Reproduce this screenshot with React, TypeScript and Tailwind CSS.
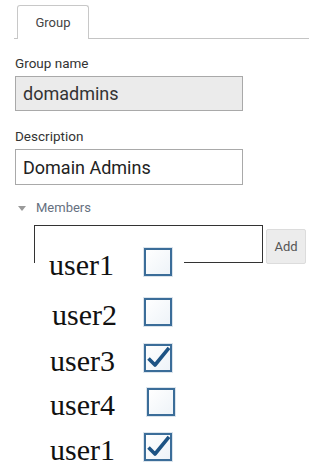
import React from "react";

type Member = { name: string; checked: boolean; textMl: string; boxMl: string; rowMt: string };

const members: Member[] = [
  { name: "user1", checked: false, textMl: "ml-[14px]", boxMl: "ml-[29px]", rowMt: "mt-0" },
  { name: "user2", checked: false, textMl: "ml-[17px]", boxMl: "ml-[26px]", rowMt: "mt-[16px]" },
  { name: "user3", checked: true, textMl: "ml-[15px]", boxMl: "ml-[28px]", rowMt: "mt-[12px]" },
  { name: "user4", checked: false, textMl: "ml-[15px]", boxMl: "ml-[31px]", rowMt: "mt-[10px]" },
  { name: "user1", checked: true, textMl: "ml-[15px]", boxMl: "ml-[28px]", rowMt: "mt-[11px]" },
];

function BigCheckbox({ checked }: { checked: boolean }) {
  return (
    <span className="flex h-[30px] w-[30px] items-center justify-center border border-[#dbe4ec] bg-white">
      <span className="relative flex h-[28px] w-[28px] items-center justify-center border-2 border-[#3b6d99] bg-gradient-to-br from-white to-[#eef3f8]">
        {checked && (
          <svg width="24" height="24" viewBox="0 0 24 24" className="absolute">
            <path d="M2.5 12.5 L9 19 L23 2" fill="none" stroke="#1d5384" strokeWidth="3.6" strokeLinejoin="round" />
          </svg>
        )}
      </span>
    </span>
  );
}

export default function App() {
  return (
    <div className="h-[476px] w-[328px] overflow-hidden bg-white font-['Roboto',_'Liberation_Sans',_sans-serif] text-[#333]">
      {/* Tabs */}
      <div className="ml-[14px] w-[295px] border-b border-[#c4c4c4] pt-[5px]">
        <div className="-mb-px ml-[3px] flex h-[34px] w-[72px] items-center justify-center rounded-t-[3px] border border-b-0 border-[#c8c8c8] bg-white text-[13px] text-[#444]">
          Group
        </div>
      </div>

      <div className="px-[15px]">
        {/* Group name */}
        <div className="mt-[15px] text-[13.5px] leading-[18px]">Group name</div>
        <div className="mt-[4px] flex h-[35px] w-[228px] items-center border border-[#a9a9a9] bg-[#ebebeb] pl-[7px] text-[18px] text-[#333]">
          domadmins
        </div>

        {/* Description */}
        <div className="mt-[16px] text-[13.5px] leading-[18px]">Description</div>
        <div className="mt-[4px] flex h-[36px] w-[228px] items-center border border-[#a9a9a9] bg-white pl-[7px] text-[18px] text-[#222]">
          Domain Admins
        </div>

        {/* Members */}
        <div className="mt-[15px] flex items-center gap-[10px] pl-[3px] text-[13px] leading-[16px] text-[#66707f]">
          <svg width="8" height="5" viewBox="0 0 8 5">
            <path d="M0 0 H8 L4 5 Z" fill="#9a9a9a" />
          </svg>
          Members
        </div>
      </div>

      <div className="mt-[9px] flex items-start pl-[34px]">
        <div className="h-[38px] w-[229px] border border-[#333] bg-white" />
        <button className="ml-[3px] mt-[4px] h-[35px] w-[40px] rounded-[2px] border border-[#dcdcdc] bg-[#ececec] text-[13px] text-[#555]">
          Add
        </button>
      </div>

      {/* Member list */}
      <div className="-mt-[19px] flex flex-col items-start pl-[35px]">
        {members.map((m, i) => (
          <div key={i} className={`flex h-[34px] items-center bg-white pr-[11px] ${m.rowMt}`}>
            <span className={`mt-[6px] font-['Liberation_Serif',_serif] text-[30px] leading-none text-[#111] ${m.textMl}`}>
              {m.name}
            </span>
            <span className={m.boxMl}>
              <BigCheckbox checked={m.checked} />
            </span>
          </div>
        ))}
      </div>
    </div>
  );
}
